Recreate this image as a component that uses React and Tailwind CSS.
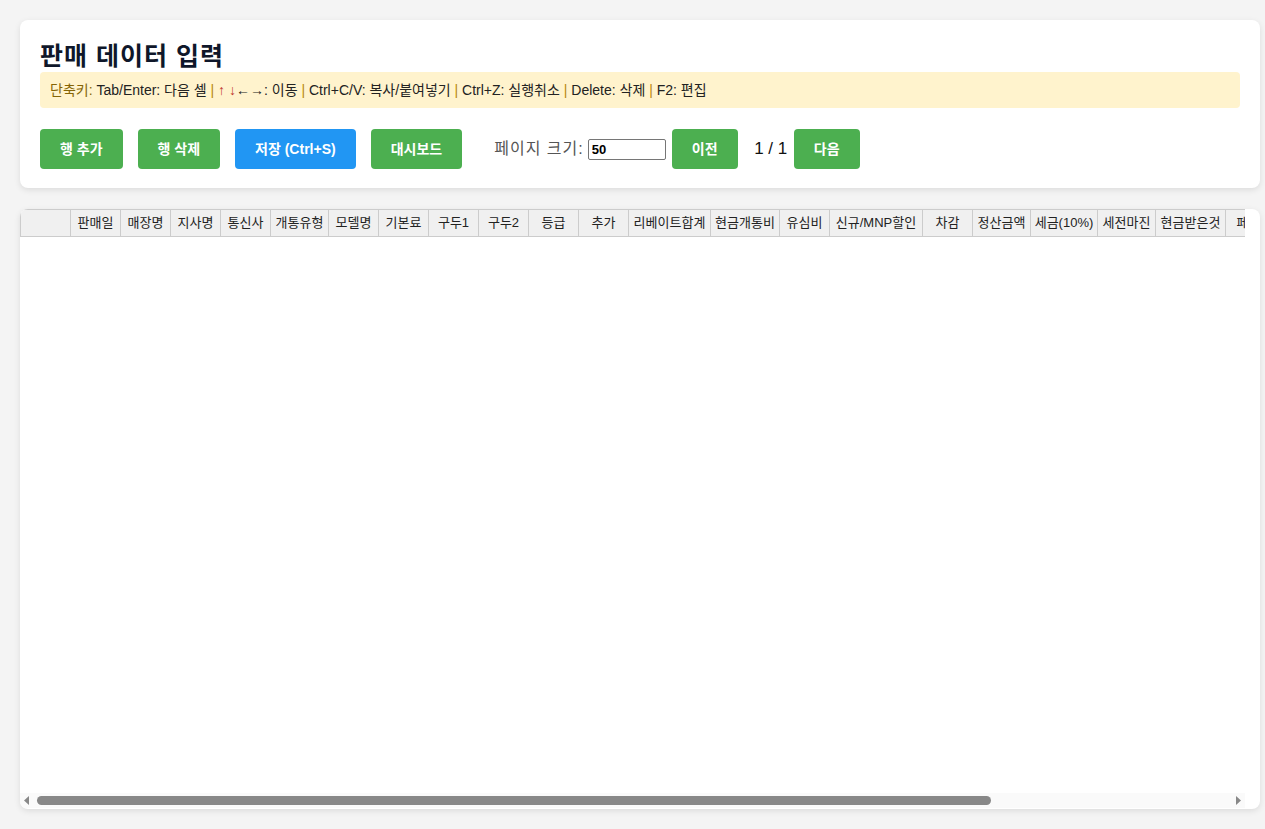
import React, { useState } from "react";

const columns = [
  { label: "", w: "w-[50px] min-w-[50px]" },
  { label: "판매일", w: "w-[50px] min-w-[50px]" },
  { label: "매장명", w: "w-[50px] min-w-[50px]" },
  { label: "지사명", w: "w-[50px] min-w-[50px]" },
  { label: "통신사", w: "w-[50px] min-w-[50px]" },
  { label: "개통유형", w: "w-[58px] min-w-[58px]" },
  { label: "모델명", w: "w-[50px] min-w-[50px]" },
  { label: "기본료", w: "w-[50px] min-w-[50px]" },
  { label: "구두1", w: "w-[50px] min-w-[50px]" },
  { label: "구두2", w: "w-[50px] min-w-[50px]" },
  { label: "등급", w: "w-[50px] min-w-[50px]" },
  { label: "추가", w: "w-[50px] min-w-[50px]" },
  { label: "리베이트합계", w: "w-[82px] min-w-[82px]" },
  { label: "현금개통비", w: "w-[69px] min-w-[69px]" },
  { label: "유심비", w: "w-[50px] min-w-[50px]" },
  { label: "신규/MNP할인", w: "w-[93px] min-w-[93px]" },
  { label: "차감", w: "w-[50px] min-w-[50px]" },
  { label: "정산금액", w: "w-[58px] min-w-[58px]" },
  { label: "세금(10%)", w: "w-[67px] min-w-[67px]" },
  { label: "세전마진", w: "w-[58px] min-w-[58px]" },
  { label: "현금받은것", w: "w-[70px] min-w-[70px]" },
  { label: "페이백", w: "w-[58px] min-w-[58px]" },
  { label: "부가서비스", w: "w-[70px] min-w-[70px]" },
  { label: "세후마진", w: "w-[58px] min-w-[58px]" },
  { label: "입력자", w: "w-[50px] min-w-[50px]" },
  { label: "비고", w: "w-[50px] min-w-[50px]" },
  { label: "상태", w: "w-[50px] min-w-[50px]" },
];

const Sep = () => <span className="text-[#b8860b]"> | </span>;

const App = () => {
  const [pageSize, setPageSize] = useState("50");

  return (
    <div className="min-h-[829px] bg-[#f4f4f4] pl-5 pt-5 pb-5 font-['Liberation_Sans','Noto_Sans_CJK_KR',sans-serif]">
      {/* header card */}
      <div className="w-[1240px] bg-white rounded-lg px-5 pt-5 pb-[19px] shadow-[0_2px_6px_rgba(0,0,0,0.1)]">
        <h2 className="text-[25px] leading-[32px] font-bold tracking-[1px] text-[#0f172a]">
          판매 데이터 입력
        </h2>
        <div className="bg-[#fff3cd] rounded px-[10px] py-[10px] text-[14px] leading-[16px] text-[#222]">
          <span className="text-[#856404]">단축키:</span> Tab/Enter: 다음 셀
          <Sep />
          <span className="text-[#c0392b]">↑ ↓</span>←→: 이동
          <Sep />
          Ctrl+C/V: 복사/붙여넣기
          <Sep />
          Ctrl+Z: 실행취소
          <Sep />
          Delete: 삭제
          <Sep />
          F2: 편집
        </div>

        <div className="flex items-center mt-[21px]">
          <div className="flex gap-[15px]">
            <button className="h-10 px-5 rounded bg-[#4caf50] text-white text-[14px] font-bold">
              행 추가
            </button>
            <button className="h-10 px-5 rounded bg-[#4caf50] text-white text-[14px] font-bold">
              행 삭제
            </button>
            <button className="h-10 px-5 rounded bg-[#2196f3] text-white text-[14px] font-bold">
              저장 (Ctrl+S)
            </button>
            <button className="h-10 px-5 rounded bg-[#4caf50] text-white text-[14px] font-bold">
              대시보드
            </button>
          </div>

          <div className="flex items-center ml-8">
            <label className="text-[16px] tracking-[1px] text-[#555]">페이지 크기:</label>
            <input
              value={pageSize}
              onChange={(e) => setPageSize(e.target.value)}
              className="ml-1 w-[78px] h-[21px] border border-[#767676] rounded-[2px] px-[3px] text-[13px] font-bold text-black"
            />
            <button className="ml-[6px] w-[66px] h-10 rounded bg-[#4caf50] text-white text-[14px] font-bold">
              이전
            </button>
            <span className="ml-4 w-[34px] text-center text-[17px] text-[#111]">1 / 1</span>
            <button className="ml-[6px] w-[66px] h-10 rounded bg-[#4caf50] text-white text-[14px] font-bold">
              다음
            </button>
          </div>
        </div>
      </div>

      {/* table card */}
      <div className="mt-[21px] w-[1240px] h-[600px] bg-white rounded-lg shadow-[0_2px_6px_rgba(0,0,0,0.1)] overflow-hidden flex flex-col">
        <div className="w-[1225px] flex-1 overflow-hidden">
          <table className="border-collapse table-fixed">
            <thead>
              <tr>
                {columns.map((col, i) => (
                  <th
                    key={i}
                    className={`${col.w} h-[27px] p-0 bg-[#f0f0f0] border border-[#ccc] text-[13px] font-normal text-[#222] text-center whitespace-nowrap overflow-hidden`}
                  >
                    {col.label}
                  </th>
                ))}
              </tr>
            </thead>
            <tbody></tbody>
          </table>
        </div>

        {/* horizontal scrollbar */}
        <div className="w-[1225px] h-[15px] mb-[1px] bg-[#fafafa] flex items-center">
          <svg width="15" height="15" viewBox="0 0 15 15" className="shrink-0">
            <path d="M4 7.5 L9 3 L9 12 Z" fill="#888" />
          </svg>
          <div className="ml-[2px] w-[954px] h-[9px] rounded-full bg-[#888]"></div>
          <div className="flex-1"></div>
          <svg width="15" height="15" viewBox="0 0 15 15" className="shrink-0">
            <path d="M11 7.5 L6 3 L6 12 Z" fill="#888" />
          </svg>
        </div>
      </div>
    </div>
  );
};

export default App;
